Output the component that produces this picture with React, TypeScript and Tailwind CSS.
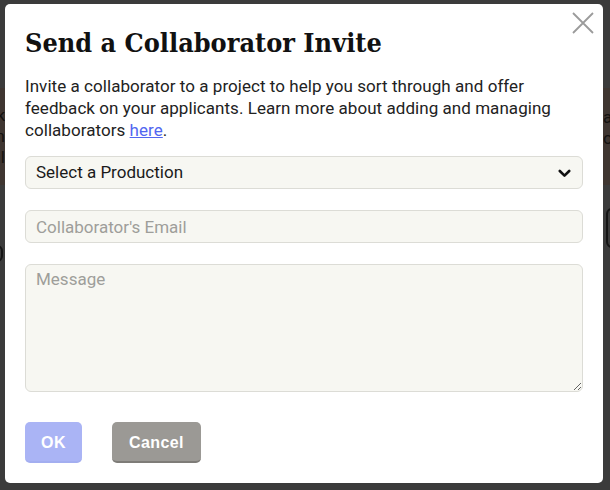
import React from "react";

function Chevron() {
  return (
    <svg width="13" height="9" viewBox="0 0 13 9" fill="none">
      <path d="M1.8 2 L6.5 6.6 L11.2 2" stroke="#111" strokeWidth="2.6" strokeLinecap="round" strokeLinejoin="round" />
    </svg>
  );
}

function CloseIcon() {
  return (
    <svg width="22" height="22" viewBox="0 0 22 22" fill="none">
      <path d="M1 1 L21 21 M21 1 L1 21" stroke="#9b9b9b" strokeWidth="1.8" />
    </svg>
  );
}

export default function App() {
  return (
    <div className="relative h-[490px] w-[610px] overflow-hidden bg-[#3b3b3b] font-['Roboto',sans-serif]">
      {/* backdrop page (dimmed) */}
      <div className="mt-[88px] flex h-[97px] justify-between bg-[#3f3631] pt-[17px] text-[17px] leading-[21px] text-[#141210]">
        <div className="flex w-[5px] flex-col items-end">
          <span>k</span>
          <span>n</span>
          <span>al</span>
        </div>
        <div className="flex w-[7px] flex-col items-start pt-[2px]">
          <span>ar</span>
          <span>or</span>
        </div>
      </div>
      <div className="mt-[23px] flex justify-between">
        <div className="-ml-[40px] mt-[37px] h-[17px] w-[43px] rounded-[6px] border-2 border-[#141414]" />
        <div className="mr-[-40px] h-[40px] w-[44px] rounded-[6px] border-2 border-[#141414]" />
      </div>

      {/* modal */}
      <div className="absolute left-[5px] top-[4px] flex h-[479px] w-[598px] flex-col rounded-[5px] bg-white px-5 pt-[23px]">
        <button className="absolute right-[9px] top-[8px]" aria-label="Close">
          <CloseIcon />
        </button>
        <h2 className="font-['DejaVu_Serif_Condensed','DejaVu_Serif',serif] text-[26.8px] font-bold leading-[32px] text-[#111]">
          Send a Collaborator Invite
        </h2>
        <p className="mt-4 text-[17px] leading-[22px] tracking-[0.05px] text-[#222]">
          Invite a collaborator to a project to help you sort through and offer feedback on your applicants. Learn more about adding and managing collaborators{" "}
          <a href="#" className="text-[#5266f0] underline">here</a>.
        </p>
        <div className="mt-[15px] flex h-[33px] items-center justify-between rounded-[6px] border border-[#dcdcd6] bg-[#f7f7f2] pl-[10px] pr-[11px] pt-[1px] text-[17px] text-[#1a1a1a]">
          <span>Select a Production</span>
          <Chevron />
        </div>
        <input
          type="text"
          placeholder="Collaborator's Email"
          className="mt-[21px] h-[33px] w-full rounded-[6px] border border-[#dcdcd6] bg-[#f7f7f2] px-[10px] pt-[1px] text-[17px] text-[#1a1a1a] outline-none placeholder:text-[#9e9e9a]"
        />
        <textarea
          placeholder="Message"
          className="mt-[21px] block h-[128px] w-full rounded-[6px] border border-[#dcdcd6] bg-[#f7f7f2] px-[10px] py-[3px] text-[17px] leading-[22px] text-[#1a1a1a] outline-none placeholder:text-[#9e9e9a]"
        />
        <div className="mt-[30px] flex gap-[30px] font-['Liberation_Sans',Arial,sans-serif] text-[16px] font-bold tracking-[0.4px] text-white">
          <button className="h-[41px] w-[57px] rounded-[5px] border-b-2 border-[#a3aef0] bg-[#aab4f5] pt-[2px]">OK</button>
          <button className="h-[41px] w-[89px] rounded-[5px] border-b-2 border-[#7e7c78] bg-[#9b9995] pt-[2px]">Cancel</button>
        </div>
      </div>
    </div>
  );
}
